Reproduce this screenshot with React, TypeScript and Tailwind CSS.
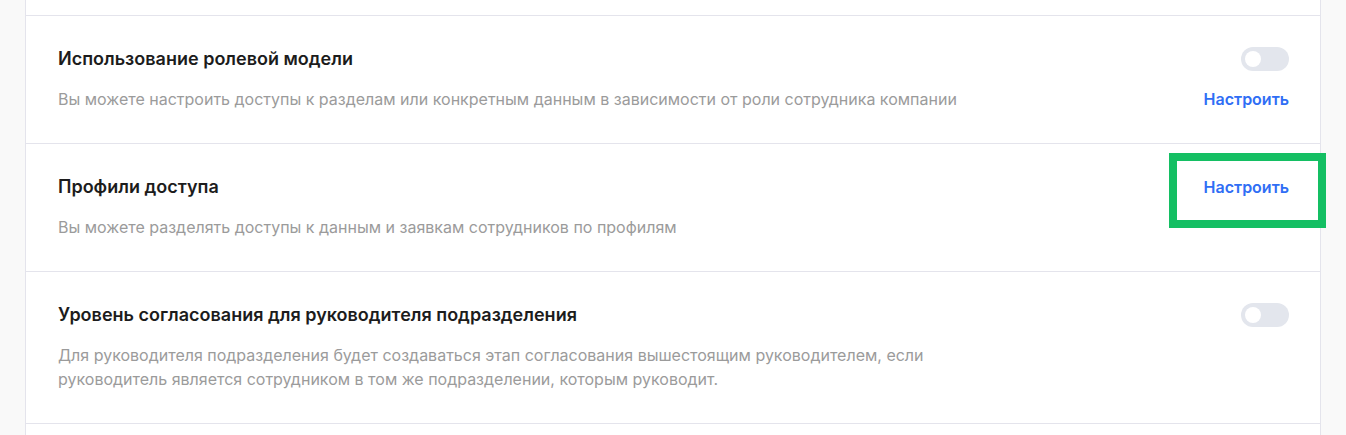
import React, { useState } from 'react';

type Setting = {
  id: string;
  title: string;
  description: string;
  toggle?: boolean;
  link?: boolean;
};

const settings: Setting[] = [
  {
    id: 'roles',
    title: 'Использование ролевой модели',
    description:
      'Вы можете настроить доступы к разделам или конкретным данным в зависимости от роли сотрудника компании',
    toggle: true,
    link: true,
  },
  {
    id: 'profiles',
    title: 'Профили доступа',
    description: 'Вы можете разделять доступы к данным и заявкам сотрудников по профилям',
    link: true,
  },
  {
    id: 'approval',
    title: 'Уровень согласования для руководителя подразделения',
    description:
      'Для руководителя подразделения будет создаваться этап согласования вышестоящим руководителем, если руководитель является сотрудником в том же подразделении, которым руководит.',
    toggle: true,
  },
];

function Toggle({ checked, onChange }: { checked: boolean; onChange: () => void }) {
  return (
    <button
      onClick={onChange}
      className={`flex h-6 w-12 items-center rounded-full px-1 transition-colors ${
        checked ? 'bg-[#2f6ef5] justify-end' : 'bg-[#e3e6ed] justify-start'
      }`}
    >
      <span className="block h-4 w-4 rounded-full bg-white" />
    </button>
  );
}

export default function App() {
  const [enabled, setEnabled] = useState<Record<string, boolean>>({});

  return (
    <div
      className="relative min-h-[435px] bg-[#f9f9f9] pl-[25px] pr-[25px]"
      style={{ fontFamily: 'Inter, "Noto Sans", sans-serif' }}
    >
      <div className="min-h-[435px] border-x border-[#e4e4ec] bg-white">
        <div className="h-4 border-b border-[#e4e4ec]" />
        {settings.map(s => (
          <div
            key={s.id}
            className="flex justify-between gap-8 border-b border-[#e4e4ec] pb-8 pl-8 pr-[31px] pt-[31px]"
          >
            <div className="min-w-0">
              <h3 className="text-[18px] font-semibold leading-6 text-[#1c1c1c]">{s.title}</h3>
              <p className="mt-4 max-w-[910px] text-[16px] leading-6 text-[#9b9b9b]">{s.description}</p>
            </div>
            <div className="flex shrink-0 flex-col items-end gap-4">
              {s.toggle && (
                <Toggle
                  checked={!!enabled[s.id]}
                  onChange={() => setEnabled(prev => ({ ...prev, [s.id]: !prev[s.id] }))}
                />
              )}
              {s.link && (
                <button className="text-[16px] font-semibold leading-6 text-[#2f6ef5]">Настроить</button>
              )}
            </div>
          </div>
        ))}
      </div>

      {/* highlight frame */}
      <div className="pointer-events-none absolute left-[1169px] top-[153px] h-[75px] w-[157px] border-8 border-[#14bf63]" />
    </div>
  );
}
